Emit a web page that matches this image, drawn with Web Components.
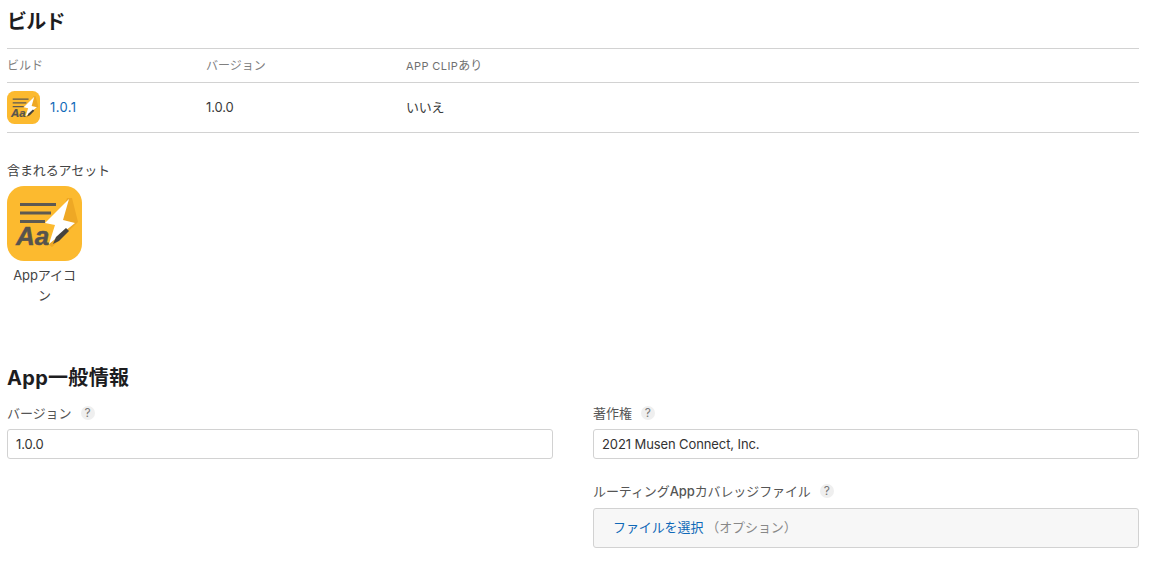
<!DOCTYPE html>
<html lang="ja"><head><meta charset="utf-8"><title>ビルド</title>
<style>
html,body{margin:0;padding:0;background:#fff}
body{font:13px/18px Inter,"Noto Sans CJK JP",sans-serif;color:#3a3a3a;width:1157px;height:582px;overflow:hidden}
</style></head><body>
<version-page></version-page>
<template id="tpl-icon"><style>:host{display:block;width:var(--s);height:var(--s)}svg{display:block;width:100%;height:100%}</style>
<svg viewBox="0 0 75 75"><rect width="75" height="75" rx="17" fill="#fcba2f"/>
<path d="M60 12 65 12 71 36 45 61 42 59z" fill="#eea825"/>
<path d="M13 18.500H49M13 27H44M13 35.500H38" stroke="#5d5a52" stroke-width="2.800" fill="none"/>
<path d="M62 13 38 37 48 39 42 58 68 37 56 34z" fill="#fff"/>
<text x="9" y="59" font-family="Liberation Sans,sans-serif" font-size="26" font-weight="700" font-style="italic" fill="#56534e" stroke="#56534e" stroke-width=".5">Aa</text>
<path d="M46 58 49 51 59 42 62 45 52 55z" fill="#45433f"/></svg></template>

<template id="tpl-help"><style>:host{display:inline-flex;width:14px;height:14px;border-radius:50%;background:#efefef;color:#777;font-size:12px;line-height:14px;justify-content:center;font-family:Inter,sans-serif}</style>?</template>

<template id="tpl-row"><style>
:host{display:grid;grid-template-columns:199px 200px 1fr;align-items:center;border-bottom:1px solid #d2d2d2}
:host([kind=head]){height:33px;color:#808080;font-size:12px;border-top:1px solid #d2d2d2}
:host([kind=body]){height:49px;color:#3a3a3a}
</style><slot></slot></template>

<template id="tpl-field"><style>
:host{display:block}
.l{display:flex;align-items:center;gap:9px;height:18px;color:#555;font-size:13px;margin-bottom:7px;letter-spacing:-.05px}
.b{display:flex;align-items:center;height:28px;border:1px solid #d2d2d2;border-radius:3px;padding:0 8px;color:#333;background:#fff;letter-spacing:-.1px}
</style><div class="l"><span><slot name="label"></slot></span><help-mark></help-mark></div><div class="b"><slot></slot></div></template>

<template id="tpl-page"><style>
:host{display:block;padding:0 18px 0 7px;width:1132px}
h2{margin:0;font-size:20px;line-height:28px;font-weight:700;color:#1d1d1f}
.h1{padding-top:8px;margin-bottom:12px;letter-spacing:-.8px}
.link{color:#0f69b8}
.num{padding-bottom:2px}
.build{display:flex;align-items:center;gap:10px;--s:33px}
.sub{margin-top:28px;height:20px;color:#444;letter-spacing:-.1px}
.asset{width:75px;margin-top:5px;--s:75px;text-align:center;color:#444;line-height:20px}
.asset span{display:block;margin-top:4px;letter-spacing:-.1px}
.h2{margin-top:59px;letter-spacing:.3px}
.cols{display:grid;grid-template-columns:546px 546px;column-gap:40px;margin-top:12px}
.col{display:flex;flex-direction:column;gap:23px}
.file{display:flex;align-items:center;height:38px;box-sizing:content-box;border:1px solid #d2d2d2;border-radius:3px;background:#f7f7f7;padding:0 20px;color:#888;letter-spacing:-.1px}
.file span{position:relative;top:-1px}
.file .link{margin-left:-1px}
.flab{display:flex;align-items:center;gap:9px;height:18px;color:#555;margin-bottom:8px;letter-spacing:-.1px}
.cap{margin-left:3px}
</style>
<h2 class="h1">ビルド</h2>
<table-row kind="head"><span>ビルド</span><span>バージョン</span><span style="font-size:11px;letter-spacing:.4px;color:#707070">APP CLIP<span style="font-size:12px;letter-spacing:0">あり</span></span></table-row>
<table-row kind="body"><div class="build"><app-icon></app-icon><span class="link num" style="letter-spacing:.4px">1.0.1</span></div><span class="num" style="letter-spacing:-.1px">1.0.0</span><span style="padding-bottom:2px;letter-spacing:-.2px">いいえ</span></table-row>
<div class="sub">含まれるアセット</div>
<div class="asset"><app-icon></app-icon><span>Appアイコン</span></div>
<h2 class="h2">App一般情報</h2>
<div class="cols">
<div class="col"><form-field><span slot="label">バージョン</span>1.0.0</form-field></div>
<div class="col"><form-field><span slot="label">著作権</span>2021 Musen Connect, Inc.</form-field>
<div><div class="flab"><span>ルーティング<b style="font-weight:500">App</b>カバレッジファイル</span><help-mark></help-mark></div>
<div class="file"><span class="link">ファイルを選択</span><span class="cap">（オプション）</span></div></div></div>
</div></template>
<script>
function reg(n,t){customElements.define(n,class extends HTMLElement{constructor(){super();this.attachShadow({mode:'open'}).appendChild(document.getElementById(t).content.cloneNode(true))}})}
reg('app-icon','tpl-icon');reg('help-mark','tpl-help');reg('table-row','tpl-row');reg('form-field','tpl-field');reg('version-page','tpl-page');
</script>
</body></html>
